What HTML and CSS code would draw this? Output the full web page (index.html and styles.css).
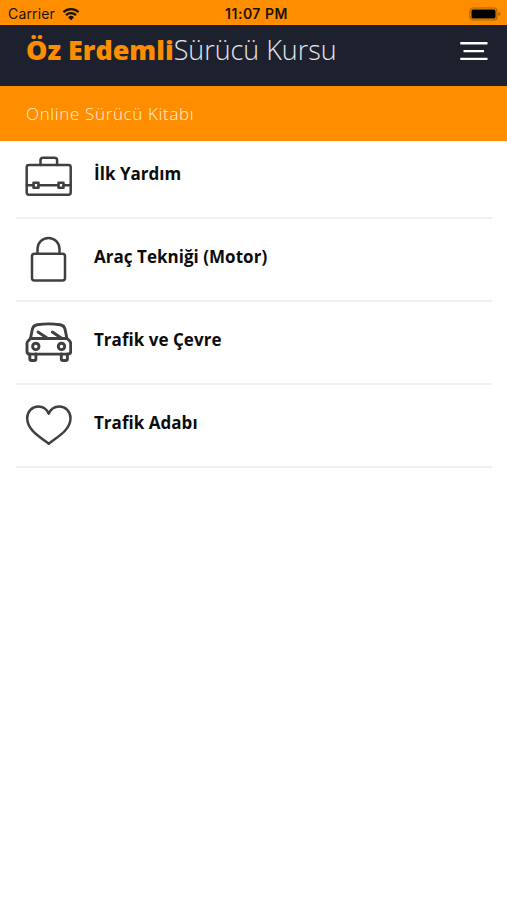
FILE: index.html
```
<!DOCTYPE html>
<html lang="tr">
<head>
    <meta charset="UTF-8">
    <meta name="viewport" content="width=device-width, initial-scale=1.0">
    <title>Öz Erdemli Sürücü Kursu</title>
    <link rel="stylesheet" href="styles.css">
</head>
<body>
    <div class="status-bar">
        <div class="carrier">
            <span>Carrier</span>
            <svg class="wifi" viewBox="0 0 18 14">
                <path d="M1.4 5.2a11 11 0 0 1 15.2 0M4 8.1a7.2 7.2 0 0 1 10 0" fill="none" stroke="#1c1202" stroke-width="2.3"/>
                <path d="M9 13.2l-3-3a4.3 4.3 0 0 1 6 0z" fill="#1c1202"/>
            </svg>
        </div>
        <div class="clock">11:07 PM</div>
        <svg class="battery" viewBox="0 0 32 14">
            <rect x="1" y="1" width="27" height="12" rx="3" fill="none" stroke="#a86206" stroke-width="1.2"/>
            <rect x="2.5" y="2.5" width="24" height="9" rx="1.5" fill="#000"/>
            <path d="M29.5 5v4q2-.7 2-2t-2-2z" fill="#a86206"/>
        </svg>
    </div>

    <header class="navbar">
        <h1 class="logo"><b>Öz Erdemli</b><span>Sürücü Kursu</span></h1>
        <button class="menu-btn" aria-label="Menü">
            <svg viewBox="0 0 28 20">
                <path d="M.3 2.3h27.2M3.5 10.1H24M.3 17.9h27.2"/>
            </svg>
        </button>
    </header>

    <div class="page-title">Online Sürücü Kitabı</div>

    <ul class="topics">
        <li>
            <svg class="icon" viewBox="0 0 48 48">
                <rect x="2.7" y="13" width="44" height="29.7" rx="2.2"/>
                <path d="M16.5 13V8.2q0-2.5 2.5-2.5h11.6q2.5 0 2.5 2.5V13M2.7 33.3h6.8M14.5 33.3h20M39.5 33.3h7.2"/>
                <rect x="9.5" y="30.8" width="5" height="5"/>
                <rect x="34.5" y="30.8" width="5" height="5"/>
            </svg>
            <span>İlk Yardım</span>
        </li>
        <li>
            <svg class="icon" viewBox="0 0 48 48">
                <rect x="8" y="18.7" width="33" height="26.8" rx="2.5"/>
                <path d="M13.5 18.7v-4.8a11 11 0 0 1 22 0v4.8"/>
            </svg>
            <span>Araç Tekniği (Motor)</span>
        </li>
        <li>
            <svg class="icon car" viewBox="0 0 48 48">
                <path d="M6.5 20.5l1.8-9q.8-4.2 4.9-4.8 11.5-1.6 23 0 4.1.6 4.9 4.8l1.8 9"/>
                <path d="M6.5 20.5h36.4l2.5 2.2q1.3 1.2 1.3 2.7v8q0 2.7-2.7 2.7H5.7Q3 36.1 3 33.4v-8q0-1.5 1.3-2.7z"/>
                <path d="M14 14l9 6M28.3 14l9 6"/>
                <circle cx="11.8" cy="28.4" r="3.2"/>
                <circle cx="37.5" cy="28.4" r="3.2"/>
                <path d="M5.8 36v4.7q0 1.8 1.8 1.8h2.5q1.8 0 1.8-1.8V36M37.3 36v4.7q0 1.8 1.8 1.8h2.5q1.8 0 1.8-1.8V36"/>
            </svg>
            <span>Trafik ve Çevre</span>
        </li>
        <li>
            <svg class="icon" viewBox="0 0 48 48">
                <path d="M24.7 12.7C22.5 8 18.8 5.6 14.5 5.6 8 5.6 3.2 10.5 3.2 17.3c0 11.2 11.3 17.7 21.5 25.5 10.2-7.8 21.8-14.3 21.8-25.5C46.5 10.5 41.7 5.6 35.2 5.6c-4.3 0-8.3 2.4-10.5 7.1z"/>
            </svg>
            <span>Trafik Adabı</span>
        </li>
    </ul>
</body>
</html>
```
FILE: styles.css
```
* {
    box-sizing: border-box;
}
body {
    margin: 0;
    background: #fff;
    color: #0c0c0c;
    font-family: "Open Sans", sans-serif;
}

.status-bar {
    display: grid;
    grid-template-columns: 1fr auto 1fr;
    align-items: center;
    height: 25px;
    padding: 3px 6px 0 8px;
    background: #ff8d00;
    color: #1c1202;
    font-family: Inter, sans-serif;
    font-size: 14px;
    line-height: 20px;
}
.carrier {
    display: flex;
    align-items: center;
    gap: 7px;
    letter-spacing: 0.15px;
}
.wifi {
    width: 18px;
    height: 14px;
}
.clock {
    padding-left: 4px;
    font-weight: 600;
    letter-spacing: 0.5px;
}
.battery {
    width: 32px;
    height: 14px;
    justify-self: end;
}

.navbar {
    display: flex;
    justify-content: space-between;
    align-items: flex-start;
    height: 61px;
    padding: 5px 19px 0 26px;
    background: #1d212d;
}
.logo {
    margin: 0;
    font-size: 26.9px;
    font-weight: 300;
    line-height: 40px;
    color: #e4e5ec;
    white-space: nowrap;
}
.logo b {
    font-weight: 800;
    color: #ff8d00;
}
.menu-btn {
    width: 28px;
    height: 20px;
    margin-top: 11px;
    padding: 0;
    border: none;
    background: none;
}
.menu-btn svg {
    display: block;
    width: 28px;
    height: 20px;
    stroke: #fff;
    stroke-width: 2.4;
}

.page-title {
    height: 55px;
    padding-left: 26px;
    background: #ff8d00;
    color: #fff0d8;
    font-size: 17px;
    font-weight: 300;
    letter-spacing: 0.65px;
    line-height: 55px;
}

.topics {
    margin: 0;
    padding: 0 15px 0 16px;
    list-style: none;
}
.topics li {
    display: flex;
    align-items: flex-start;
    gap: 22px;
    height: 83px;
    padding: 16px 0 0 8px;
    border-bottom: 2px solid #f0f0f0;
}
.topics li:first-child {
    height: 78px;
    padding-top: 11px;
}
.topics span {
    font-size: 17px;
    font-weight: 700;
    letter-spacing: 0.03px;
    line-height: 44px;
}
.icon {
    width: 48px;
    height: 48px;
    fill: none;
    stroke: #404040;
    stroke-width: 2.5;
    stroke-linejoin: round;
    stroke-linecap: round;
}
.icon.car {
    stroke-width: 2.9;
}
```
